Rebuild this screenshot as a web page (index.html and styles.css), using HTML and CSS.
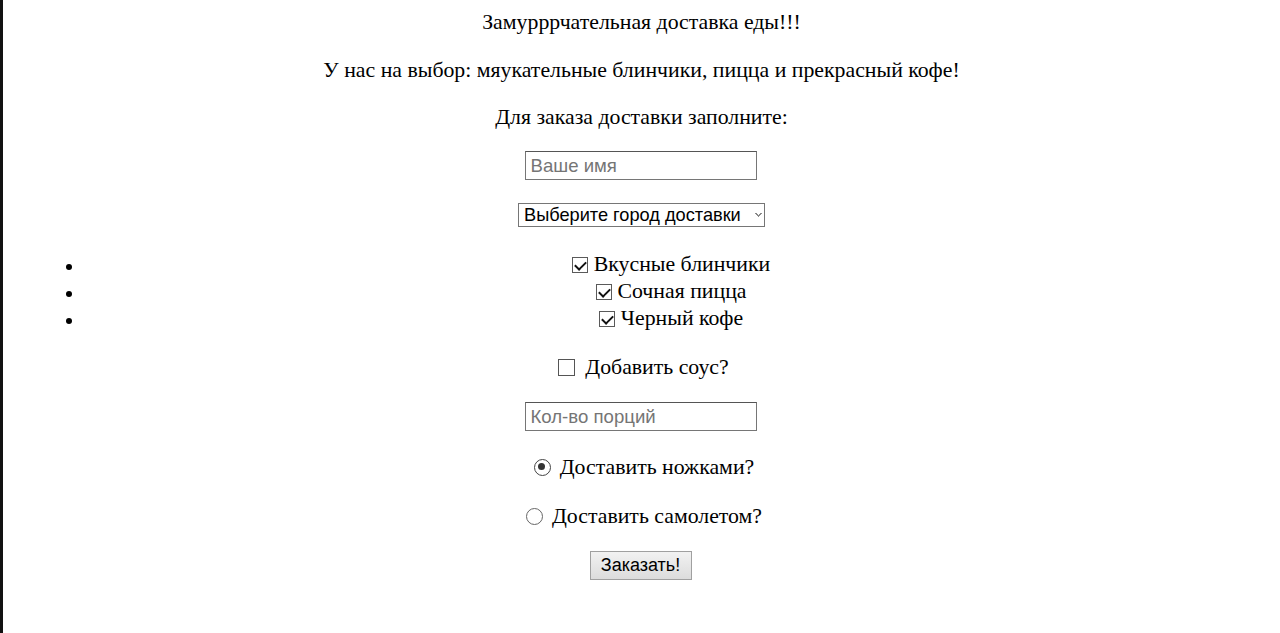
FILE: index.html
```html
<!DOCTYPE html>
<html lang="ru">
<head>
<meta charset="utf-8">
<title>Доставка</title>
<link rel="stylesheet" href="styles.css">
</head>
<body>
<div class="page">
  <p class="line first">Замурррчательная доставка еды!!!</p>
  <p class="line second">У нас на выбор: мяукательные блинчики, пицца и прекрасный кофе!</p>
  <p class="line third">Для заказа доставки заполните:</p>
  <form class="order">
    <div class="row row-name"><input class="field" type="text" placeholder="Ваше имя"></div>
    <div class="row row-city">
      <select class="city">
        <option>Выберите город доставки</option>
      </select>
    </div>
    <ul class="menu">
      <li><label><input class="check" type="checkbox" checked>Вкусные блинчики</label></li>
      <li><label><input class="check" type="checkbox" checked>Сочная пицца</label></li>
      <li><label><input class="check" type="checkbox" checked>Черный кофе</label></li>
    </ul>
    <div class="row row-sauce"><label><input class="check sauce" type="checkbox">Добавить соус?</label></div>
    <div class="row row-qty"><input class="field" type="text" placeholder="Кол-во порций"></div>
    <div class="row row-r1"><label><input class="radio" type="radio" name="way" checked>Доставить ножками?</label></div>
    <div class="row row-r2"><label><input class="radio" type="radio" name="way">Доставить самолетом?</label></div>
    <div class="row row-btn"><button class="submit" type="button">Заказать!</button></div>
  </form>
</div>
</body>
</html>
```
FILE: styles.css
```css
html, body {
  margin: 0;
  padding: 0;
  background: #fff;
}
body {
  font-family: "Liberation Serif", "Times New Roman", serif;
  font-size: 21.8px;
  color: #000;
}
.page {
  border-left: 3px solid #111;
  min-height: 633px;
  box-sizing: border-box;
  padding: 0 10px;
  text-align: center;
}
.line {
  margin: 0;
  line-height: 24px;
}
.first { padding-top: 10px; }
.second { margin-top: 24px; }
.third { margin-top: 23px; }
.order {
  margin: 0;
}
.row {
  display: flex;
  justify-content: center;
  align-items: center;
}
.row-name { margin-top: 22px; }
.field {
  width: 232px;
  height: 29px;
  box-sizing: border-box;
  margin: 0 2px 0 0;
  padding: 0 5px;
  border: 1px solid #767676;
  border-top-color: #555;
  font-family: "Liberation Sans", Arial, sans-serif;
  font-size: 18.6px;
  color: #000;
  background: #fff;
}
.field::placeholder {
  color: #757575;
}
.row-city { margin-top: 23px; }
.city {
  width: 247px;
  height: 24px;
  box-sizing: border-box;
  margin: 0;
  padding: 0 0 0 5px;
  border: 1px solid #767676;
  border-radius: 0;
  font-family: "Liberation Sans", Arial, sans-serif;
  font-size: 18.2px;
  color: #000;
  background: #fff;
  appearance: none;
  -webkit-appearance: none;
  background-image: linear-gradient(45deg, transparent 45%, #888 45%, #888 75%, transparent 75%), linear-gradient(-45deg, transparent 45%, #888 45%, #888 75%, transparent 75%);
  background-position: 236px 9px, 239px 9px;
  background-size: 4px 4px, 4px 4px;
  background-repeat: no-repeat;
}
.menu {
  margin: 24px 0 0 0;
  padding: 0 13px 0 72px;
  list-style: disc;
}
.menu li {
  height: 27px;
  line-height: 27px;
}
.menu label {
  display: inline-flex;
  align-items: center;
}
.check {
  appearance: none;
  -webkit-appearance: none;
  width: 16px;
  height: 16px;
  box-sizing: border-box;
  margin: 0 6px 0 0;
  border: 1px solid #5a5a5a;
  background: #fff;
  position: relative;
  flex: none;
}
.check:checked::after {
  content: "";
  position: absolute;
  left: 4px;
  top: 1px;
  width: 5px;
  height: 9px;
  border-right: 2px solid #111;
  border-bottom: 2px solid #111;
  transform: rotate(45deg);
}
.check.sauce {
  width: 17px;
  height: 17px;
  margin: 0 10px 0 4px;
  border: 1.5px solid #555;
}
.row-sauce { margin-top: 23px; height: 24px; }
.row label {
  display: inline-flex;
  align-items: center;
}
.row-qty { margin-top: 23px; }
.row-r1 { margin-top: 23px; height: 26px; }
.row-r2 { margin-top: 23px; height: 26px; }
.radio {
  appearance: none;
  -webkit-appearance: none;
  width: 17px;
  height: 17px;
  box-sizing: border-box;
  margin: 0 9px 0 5px;
  border: 1.5px solid #666;
  border-radius: 50%;
  background: #fff;
  position: relative;
  flex: none;
}
.radio:checked {
  border-color: #444;
}
.radio:checked::after {
  content: "";
  position: absolute;
  left: 3.5px;
  top: 3.5px;
  width: 7px;
  height: 7px;
  border-radius: 50%;
  background: #333;
}
.row-btn { margin-top: 22px; }
.submit {
  width: 102px;
  height: 29px;
  box-sizing: border-box;
  margin: 0 2px 0 0;
  padding: 0;
  border: 1px solid #a0a0a0;
  border-radius: 0;
  background: linear-gradient(#f2f2f2, #dcdcdc);
  font-family: "Liberation Sans", Arial, sans-serif;
  font-size: 18px;
  color: #000;
}
```
